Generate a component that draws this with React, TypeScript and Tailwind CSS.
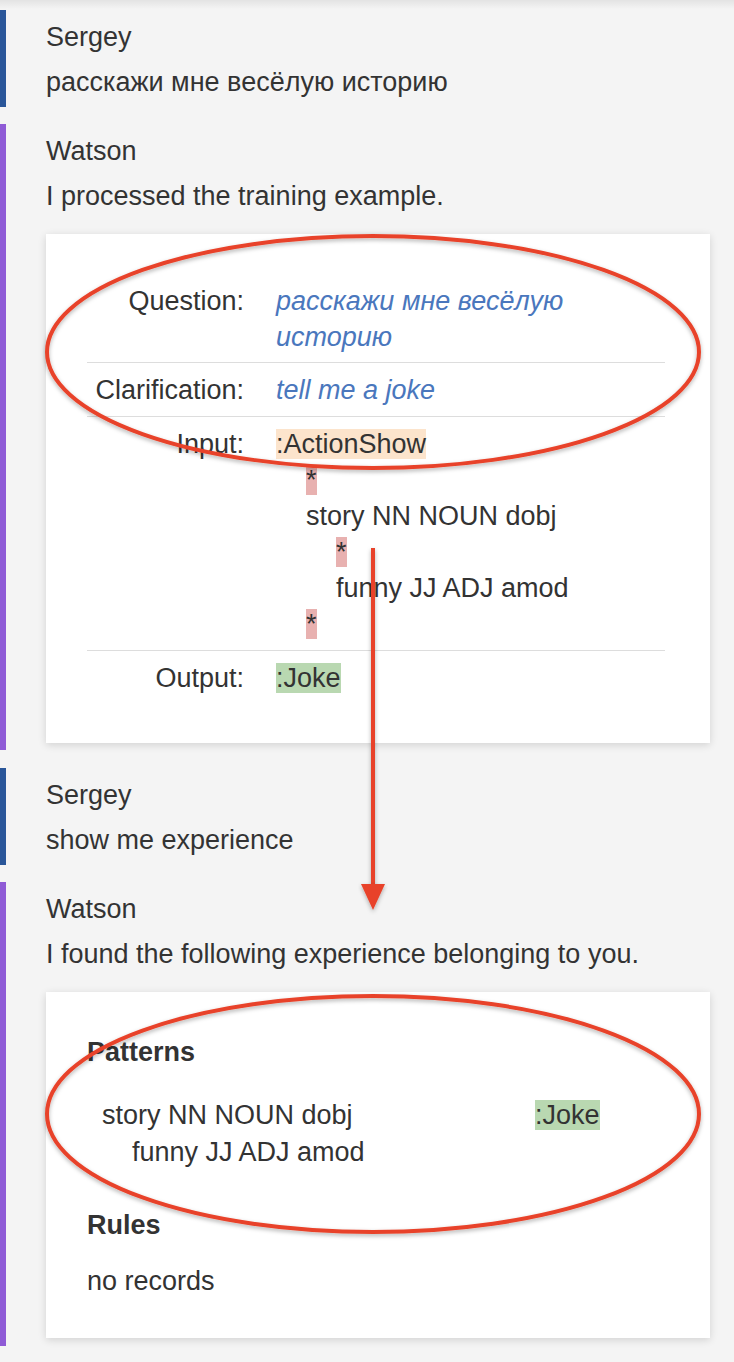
import React from "react";

const font = { fontFamily: '"Liberation Sans", Arial, sans-serif' };

const Star = ({ indent }: { indent: number }) => (
  <div className="h-[36px]" style={{ paddingLeft: indent }}>
    <span className="bg-[#e8b1b0]">*</span>
  </div>
);

const Message = ({
  name,
  text,
  bar,
  className,
  children,
}: {
  name: string;
  text: string;
  bar: string;
  className?: string;
  children?: React.ReactNode;
}) => (
  <div className={`border-l-[6px] pl-[40px] pr-[24px] pt-[9px] ${bar} ${className ?? ""}`}>
    <div className="h-[36px]">{name}</div>
    <div className="mt-[9px] h-[36px]">{text}</div>
    {children}
  </div>
);

const Row = ({
  label,
  children,
  last,
  pb = "pb-[9px]",
}: {
  label: string;
  children: React.ReactNode;
  last?: boolean;
  pb?: string;
}) => (
  <div className={`flex pt-[9px] ${pb} ${last ? "" : "border-b border-[#dddddd]"}`}>
    <div className="w-[157px] shrink-0 text-right">{label}</div>
    <div className="pl-[32px]">{children}</div>
  </div>
);

export default function App() {
  return (
    <div
      className="relative min-h-[1362px] overflow-hidden bg-[#f4f4f4] text-[27px] leading-[36px] text-[#333333]"
      style={font}
    >
      <div className="absolute inset-x-0 top-0 h-[9px] bg-gradient-to-b from-[rgba(0,0,0,0.07)] to-transparent" />

      <Message
        name="Sergey"
        text="расскажи мне весёлую историю"
        bar="border-[#2a5699]"
        className="mt-[10px] pb-[7px]"
      />

      <Message
        name="Watson"
        text="I processed the training example."
        bar="border-[#8f5bd6]"
        className="mt-[17px] pb-[7px]"
      >
        <div className="mt-[20px] bg-white px-[41px] pt-[40px] pb-[38px] shadow-[0_2px_8px_rgba(0,0,0,0.14)]">
          <div className="w-[578px]">
            <Row label="Question:" pb="pb-[7px]">
              <div className="italic text-[#4a77bd]">
                расскажи мне весёлую
                <br />
                историю
              </div>
            </Row>
            <Row label="Clarification:" pb="pb-[8px]">
              <span className="italic text-[#4a77bd]">tell me a joke</span>
            </Row>
            <Row label="Input:" pb="pb-[8px]">
              <div className="h-[36px]">
                <span className="bg-[#fce4cc]">:ActionShow</span>
              </div>
              <Star indent={30} />
              <div className="h-[36px] pl-[30px]">story NN NOUN dobj</div>
              <Star indent={60} />
              <div className="h-[36px] pl-[60px]">funny JJ ADJ amod</div>
              <Star indent={30} />
            </Row>
            <Row label="Output:" last>
              <span className="bg-[#b9d8b1]">:Joke</span>
            </Row>
          </div>
        </div>
      </Message>

      <Message
        name="Sergey"
        text="show me experience"
        bar="border-[#2a5699]"
        className="mt-[18px] pb-[7px]"
      />

      <Message
        name="Watson"
        text="I found the following experience belonging to you."
        bar="border-[#8f5bd6]"
        className="mt-[17px] pb-[8px]"
      >
        <div className="mt-[20px] bg-white px-[41px] pt-[42px] pb-[39px] shadow-[0_2px_8px_rgba(0,0,0,0.14)]">
          <div className="font-bold">Patterns</div>
          <div className="mt-[27px] flex">
            <div className="w-[433px] shrink-0 pl-[15px]">
              <div>story NN NOUN dobj</div>
              <div className="mt-[1px] pl-[30px]">funny JJ ADJ amod</div>
            </div>
            <div className="pl-[15px]">
              <span className="bg-[#b9d8b1]">:Joke</span>
            </div>
          </div>
          <div className="mt-[37px] font-bold">Rules</div>
          <div className="mt-[20px]">no records</div>
        </div>
      </Message>

      <svg
        className="pointer-events-none absolute left-0 top-0"
        width="734"
        height="1362"
        viewBox="0 0 734 1362"
      >
        <defs>
          <filter id="sh" x="-10%" y="-10%" width="120%" height="130%">
            <feDropShadow dx="0" dy="2" stdDeviation="2" floodColor="#000" floodOpacity="0.3" />
          </filter>
        </defs>
        <g filter="url(#sh)" fill="none" stroke="#e8432a" strokeWidth="4">
          <ellipse cx="373" cy="352" rx="326" ry="116" />
          <ellipse cx="373" cy="1114" rx="326" ry="118" />
          <line x1="373" y1="548" x2="373" y2="888" />
        </g>
        <polygon points="361,884 385,884 373,910" fill="#e8432a" filter="url(#sh)" />
      </svg>
    </div>
  );
}
